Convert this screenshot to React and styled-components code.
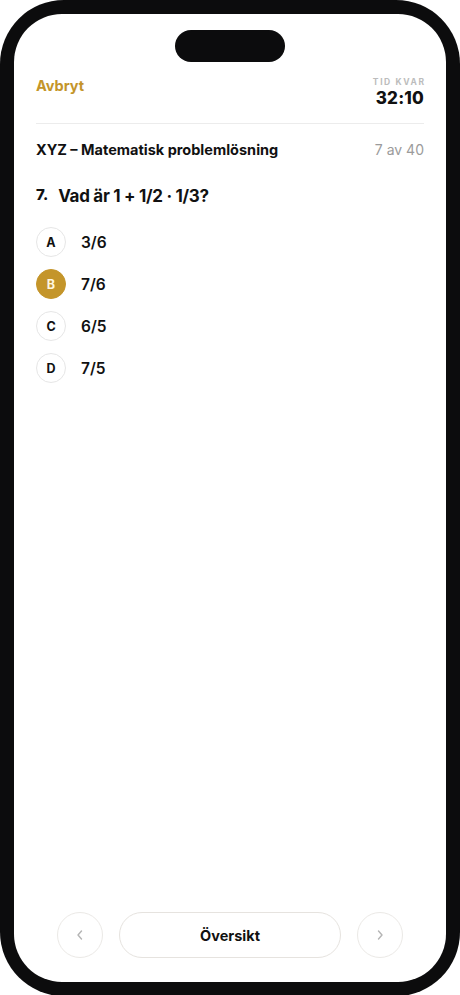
import React from "react";
import styled, { createGlobalStyle } from "styled-components";

const GlobalStyle = createGlobalStyle`
  html, body {
    margin: 0;
    padding: 0;
    background: #ffffff;
  }
  body {
    font-family: Inter, "Noto Sans", "Liberation Sans", sans-serif;
    color: #111111;
    -webkit-font-smoothing: antialiased;
  }
`;

const GOLD = "#c4952a";

const options = [
  { key: "A", text: "3/6" },
  { key: "B", text: "7/6", selected: true },
  { key: "C", text: "6/5" },
  { key: "D", text: "7/5" },
];

const Chevron = ({ dir }) => (
  <svg width="10" height="12" viewBox="0 0 10 12" fill="none">
    <polyline
      points={dir === "left" ? "6.5,2 3,6 6.5,10" : "3.5,2 7,6 3.5,10"}
      stroke="#b4b4b4"
      strokeWidth="1.4"
      strokeLinecap="round"
      strokeLinejoin="round"
    />
  </svg>
);

const App = () => {
  return (
    <>
      <GlobalStyle />
      <Phone>
        <Screen>
          <Island />
          <Header>
            <CancelLink>Avbryt</CancelLink>
            <Timer>
              <TimerLabel>TID KVAR</TimerLabel>
              <TimerValue>32:10</TimerValue>
            </Timer>
          </Header>
          <Divider />
          <TestRow>
            <TestTitle>XYZ – Matematisk problemlösning</TestTitle>
            <Progress>7 av 40</Progress>
          </TestRow>
          <Question>
            <QuestionNumber>7.</QuestionNumber>
            <QuestionText>Vad är 1 + 1/2 · 1/3?</QuestionText>
          </Question>
          <OptionList>
            {options.map((o) => (
              <Option key={o.key}>
                <OptionBadge $selected={o.selected}>{o.key}</OptionBadge>
                <OptionText>{o.text}</OptionText>
              </Option>
            ))}
          </OptionList>
          <Footer>
            <RoundButton aria-label="Föregående">
              <Chevron dir="left" />
            </RoundButton>
            <OverviewButton>Översikt</OverviewButton>
            <RoundButton aria-label="Nästa">
              <Chevron dir="right" />
            </RoundButton>
          </Footer>
        </Screen>
      </Phone>
    </>
  );
};

const Phone = styled.div`
  width: 460px;
  height: 996px;
  box-sizing: border-box;
  padding: 14px;
  background: #0c0c0d;
  border-radius: 64px;
`;

const Screen = styled.div`
  height: 100%;
  background: #ffffff;
  border-radius: 48px;
  display: flex;
  flex-direction: column;
  padding: 16px 22px 24px;
  box-sizing: border-box;
`;

const Island = styled.div`
  align-self: center;
  width: 110px;
  height: 32px;
  border-radius: 16px;
  background: #0c0c0d;
`;

const Header = styled.div`
  display: flex;
  justify-content: space-between;
  align-items: flex-start;
  margin-top: 15px;
  padding-bottom: 15px;
`;

const CancelLink = styled.span`
  color: ${GOLD};
  font-size: 14.5px;
  font-weight: 700;
  margin-top: 0;
`;

const Timer = styled.div`
  display: flex;
  flex-direction: column;
  align-items: flex-end;
`;

const TimerLabel = styled.span`
  font-size: 8.5px;
  font-weight: 700;
  letter-spacing: 1.6px;
  margin-right: -1.6px;
  color: #bcbcbc;
  line-height: 11px;
`;

const TimerValue = styled.span`
  font-size: 17px;
  font-weight: 800;
  line-height: 20px;
  letter-spacing: 0.2px;
`;

const Divider = styled.div`
  height: 1px;
  background: #ececec;
`;

const TestRow = styled.div`
  display: flex;
  justify-content: space-between;
  align-items: center;
  margin-top: 17px;
`;

const TestTitle = styled.span`
  font-size: 14.5px;
  font-weight: 700;
  letter-spacing: 0;
`;

const Progress = styled.span`
  font-size: 14px;
  color: #9b9b9b;
`;

const Question = styled.div`
  display: flex;
  align-items: baseline;
  gap: 10px;
  margin-top: 28px;
`;

const QuestionNumber = styled.span`
  font-size: 15px;
  font-weight: 800;
  position: relative;
  top: -2px;
`;

const QuestionText = styled.span`
  font-size: 17px;
  font-weight: 700;
  letter-spacing: -0.3px;
`;

const OptionList = styled.div`
  display: flex;
  flex-direction: column;
  gap: 12px;
  margin-top: 21px;
  flex: 1;
`;

const Option = styled.div`
  display: flex;
  align-items: center;
  gap: 15px;
`;

const OptionBadge = styled.div`
  width: 30px;
  height: 30px;
  box-sizing: border-box;
  border-radius: 50%;
  display: flex;
  align-items: center;
  justify-content: center;
  font-size: 12.5px;
  font-weight: 700;
  border: 1px solid ${(p) => (p.$selected ? GOLD : "#e6e6e6")};
  background: ${(p) => (p.$selected ? GOLD : "#ffffff")};
  color: ${(p) => (p.$selected ? "#fff6e0" : "#111111")};
`;

const OptionText = styled.span`
  font-size: 15.5px;
  font-weight: 600;
`;

const Footer = styled.div`
  display: flex;
  align-items: center;
  gap: 16px;
  padding: 0 21px;
`;

const RoundButton = styled.button`
  width: 46px;
  height: 46px;
  flex: none;
  border-radius: 50%;
  border: 1px solid #ebe9e6;
  background: #ffffff;
  display: flex;
  align-items: center;
  justify-content: center;
  padding: 0;
`;

const OverviewButton = styled.button`
  flex: 1;
  height: 46px;
  border-radius: 23px;
  border: 1px solid #e6e3df;
  background: #ffffff;
  font-family: inherit;
  font-size: 14.5px;
  font-weight: 700;
  color: #111111;
`;

export default App;
